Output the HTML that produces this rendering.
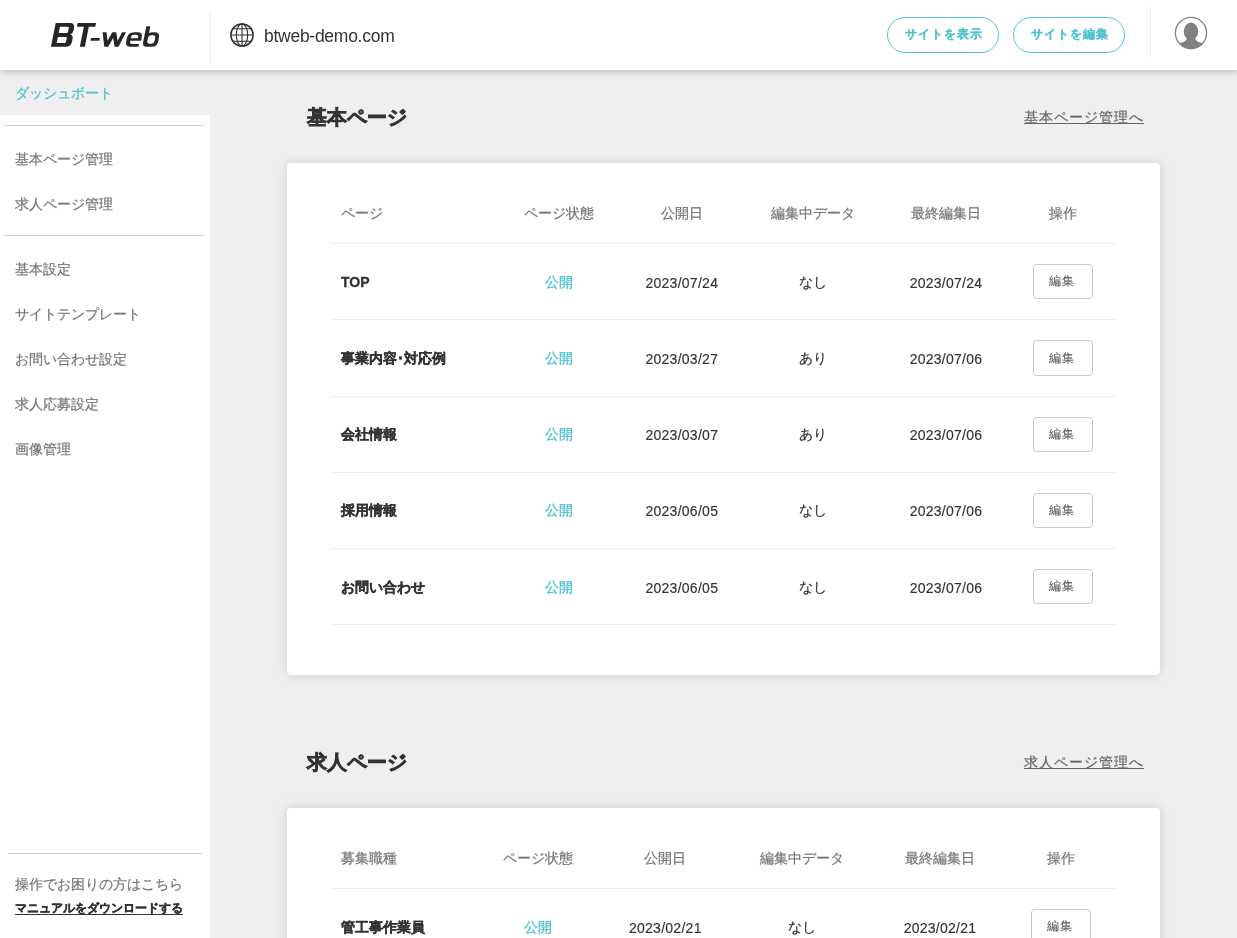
<!DOCTYPE html>
<html lang="ja">
<head>
<meta charset="utf-8">
<title>BT-web</title>
<style>
*{box-sizing:border-box;margin:0;padding:0}
html,body{width:1237px;height:938px;overflow:hidden}
body{font-family:"Liberation Sans",sans-serif;background:#efefef;color:#333;position:relative;font-size:14px}
/* header */
#hd{position:absolute;left:0;top:0;width:1237px;height:70px;background:#fff;box-shadow:0 2px 7px rgba(0,0,0,.20);z-index:10}
#logo{position:absolute;left:0;top:0;width:237px;height:70px}
#hd .v1{position:absolute;left:210px;top:13px;width:1px;height:50px;background:#ececec}
#hd .v2{position:absolute;left:1150px;top:7px;width:1px;height:50px;background:#ececec}
#globe{position:absolute;left:230px;top:22.9px;width:24px;height:24px}
#domain{position:absolute;left:264px;top:24.4px;font-size:17.5px;line-height:24px;color:#333;letter-spacing:-.27px;white-space:nowrap}
.pill{-webkit-text-stroke:.12px;position:absolute;top:17px;width:112px;height:36px;border:1px solid #4fc3d0;border-radius:18px;color:#4fc3d0;font-size:12px;font-weight:bold;line-height:32px;text-align:center;letter-spacing:1px;padding-left:1px;background:#fff}
#b1{left:887px}
#b2{left:1013px}
#avatar{position:absolute;left:1174px;top:16px;width:34px;height:34px}
/* sidebar */
#hd,#sb,.card,.h2,.lnk{will-change:transform}
#sb{position:absolute;left:0;top:70px;width:210px;height:868px;background:#fff}
#sb .act{position:absolute;left:0;top:0;width:210px;height:45px;background:#efefef}
#sb .it{-webkit-text-stroke:.2px;position:absolute;left:15px;font-size:14px;line-height:20px;color:#757575;white-space:nowrap}
#sb .hr{position:absolute;left:4px;width:200px;height:1px;background:#cfcfcf}
/* main */
.h2{-webkit-text-stroke:.7px #333;position:absolute;left:307px;font-size:20px;font-weight:bold;line-height:28px;color:#333;white-space:nowrap}
.lnk{-webkit-text-stroke:.2px;position:absolute;font-size:14px;line-height:20px;color:#666;text-decoration:underline;white-space:nowrap}
.card{position:absolute;left:287px;width:873px;background:#fff;border-radius:4px;box-shadow:0 0 11px rgba(0,0,0,.15)}
.ln{position:absolute;left:44px;width:785px;height:1px;background:#ebebeb}
.c{-webkit-text-stroke:.2px;position:absolute;white-space:nowrap;text-align:center;font-size:14px;line-height:20px;color:#333}
.c.h{color:#757575}
.c.n{-webkit-text-stroke:.3px;text-align:left;font-weight:bold;color:#333}
.c.n.h{-webkit-text-stroke:.2px;font-weight:normal;color:#757575}
.c.pub{color:#4fc3d0;-webkit-text-stroke:.3px}
.c.d{-webkit-text-stroke:.15px;letter-spacing:.27px;padding-left:.27px}
.btn{-webkit-text-stroke:.15px;position:absolute;width:60px;height:35px;border:1px solid #c9c9c9;border-radius:4px;background:#fff;font-size:12px;line-height:33px;color:#666;text-align:center;letter-spacing:1px;padding-right:2.5px}
</style>
</head>
<body>
<div id="hd">
  <svg id="logo" viewBox="0 0 237 70" width="237" height="70" fill="#262626">
    <defs><clipPath id="wc"><rect x="46" y="-14.47" width="30" height="14.47"/></clipPath></defs>
    <g transform="translate(50.94 46.75) skewX(-11.31)">
      <path fill-rule="evenodd" d="M0 0V-23.8H14.1Q19.3-23.8 19.3-18.6V-16.3Q19.3-13 16.9-12.2Q20.05-11.4 20.05-8V-5.2Q20.05 0 14.8 0ZM5-19.9V-13.8H13Q14.1-13.8 14.1-14.9V-18.8Q14.1-19.9 13-19.9ZM5-9.74V-3.85H13Q14.1-3.85 14.1-4.95V-8.64Q14.1-9.74 13-9.74Z"/>
      <path d="M21.95-23.8H40.3V-19.95H33.9V-.5Q33.9 0 33.4 0H29.4Q28.9 0 28.9-.5V-19.95H21.95Z"/>
      <path d="M38.3-8.8H47.1V-6.1H38.3Z"/>
      <path clip-path="url(#wc)" fill="none" stroke="#262626" stroke-width="3.75" stroke-miterlimit="10" d="M50.06-16.47L55.3 0L60.45-14.47L65.6 0L70.84-16.47"/>
      <path fill-rule="evenodd" d="M88.9-6V-9.5Q88.9-14.47 83.9-14.47H80.2Q74.2-14.47 74.2-8.47V-5.5Q74.2 0 79.7 0H86.5Q87.9 0 87.9-1.38Q87.9-2.76 86.5-2.76H80.5Q78.2-2.76 78.2-5V-6ZM78.1-8.5V-9.6Q78.1-11.9 80.4-11.9H82.7Q85.3-11.9 85.3-9.6V-8.5Z"/>
      <path fill-rule="evenodd" d="M91.3-20Q91.3-20.5 91.8-20.5H94.8Q95.3-20.5 95.3-20V-13.6Q96.5-14.47 99-14.47H100.7Q106.2-14.47 106.2-8.97V-5.5Q106.2 0 100.7 0H95.8Q91.3 0 91.3-4.5ZM95.3-8.9Q95.3-11.5 97.9-11.5H99.9Q102.5-11.5 102.5-8.9V-5.7Q102.5-3.1 99.9-3.1H97.9Q95.3-3.1 95.3-5.7Z"/>
    </g>
  </svg>
  <div class="v1"></div>
  <svg id="globe" viewBox="0 0 24 24" fill="none" stroke="#2e2e2e" stroke-width="1.1">
    <circle cx="12" cy="12" r="11.1" stroke-width="1.5"/>
    <ellipse cx="12" cy="12" rx="5.7" ry="11.1"/>
    <path d="M12 .9V23.1M.9 12H23.1M2.8 5.8H21.2M2.8 18.2H21.2"/>
  </svg>
  <div id="domain">btweb-demo.com</div>
  <div class="pill" id="b1">サイトを表示</div>
  <div class="pill" id="b2">サイトを編集</div>
  <div class="v2"></div>
  <svg id="avatar" viewBox="0 0 34 34">
    <defs><clipPath id="cp"><circle cx="17" cy="17" r="15.6"/></clipPath></defs>
    <g clip-path="url(#cp)" fill="#808080">
      <ellipse cx="17" cy="15.4" rx="7.2" ry="8.8"/>
      <path d="M13 22 C12.5 25 9 26.3 5 27.6 L3 34 L31 34 L29 27.6 C25 26.3 21.5 25 21 22 Z"/>
    </g>
    <circle cx="17" cy="17" r="15.6" fill="none" stroke="#808080" stroke-width="1.3"/>
  </svg>
</div>
<div id="sb">
  <div class="act"></div>
  <div class="it" style="top:13px;color:#4fc3d0;-webkit-text-stroke:.3px">ダッシュボート</div>
  <div class="hr" style="top:55px"></div>
  <div class="it" style="top:79px">基本ページ管理</div>
  <div class="it" style="top:124px">求人ページ管理</div>
  <div class="hr" style="top:165px"></div>
  <div class="it" style="top:189px">基本設定</div>
  <div class="it" style="top:234px">サイトテンプレート</div>
  <div class="it" style="top:279px">お問い合わせ設定</div>
  <div class="it" style="top:324px">求人応募設定</div>
  <div class="it" style="top:369px">画像管理</div>
  <div class="hr" style="top:783px;left:8px;width:194px"></div>
  <div class="it" style="top:804px">操作でお困りの方はこちら</div>
  <div class="it" style="top:828px;font-size:12px;font-weight:bold;color:#333;text-decoration:underline;text-underline-offset:2px;-webkit-text-stroke:.35px">マニュアルをダウンロードする</div>
</div>
<div class="h2" style="top:103px">基本ページ</div>
<div class="lnk" style="left:1024px;top:107px;letter-spacing:1px">基本ページ管理へ</div>
<div class="card" id="c1" style="top:163px;height:512px">
    <div class="c n h" style="left:54px;top:39.8px">ページ</div>
    <div class="c h" style="left:212.3px;top:39.8px;width:120px">ページ状態</div>
    <div class="c h" style="left:334.7px;top:39.8px;width:120px">公開日</div>
    <div class="c h" style="left:466.0px;top:39.8px;width:120px">編集中データ</div>
    <div class="c h" style="left:598.9px;top:39.8px;width:120px">最終編集日</div>
    <div class="c h" style="left:716.0px;top:39.8px;width:120px">操作</div>
    <div class="ln" style="top:80px"></div>
    <div class="ln" style="top:156px"></div>
    <div class="ln" style="top:233px"></div>
    <div class="ln" style="top:309px"></div>
    <div class="ln" style="top:385px"></div>
    <div class="ln" style="top:461px"></div>
    <div class="c n" style="left:54px;top:108.6px">TOP</div>
    <div class="c pub" style="left:212.3px;top:108.6px;width:120px">公開</div>
    <div class="c d" style="left:334.7px;top:109.5px;width:120px">2023/07/24</div>
    <div class="c " style="left:466.0px;top:108.6px;width:120px">なし</div>
    <div class="c d" style="left:598.9px;top:109.5px;width:120px">2023/07/24</div>
    <div class="btn" style="left:746px;top:101px;height:35px;line-height:33px">編集</div>
    <div class="c n" style="left:54px;top:184.9px">事業内容･対応例</div>
    <div class="c pub" style="left:212.3px;top:184.9px;width:120px">公開</div>
    <div class="c d" style="left:334.7px;top:185.8px;width:120px">2023/03/27</div>
    <div class="c " style="left:466.0px;top:184.9px;width:120px">あり</div>
    <div class="c d" style="left:598.9px;top:185.8px;width:120px">2023/07/06</div>
    <div class="btn" style="left:746px;top:177px;height:36px;line-height:34px">編集</div>
    <div class="c n" style="left:54px;top:261.1px">会社情報</div>
    <div class="c pub" style="left:212.3px;top:261.1px;width:120px">公開</div>
    <div class="c d" style="left:334.7px;top:262.0px;width:120px">2023/03/07</div>
    <div class="c " style="left:466.0px;top:261.1px;width:120px">あり</div>
    <div class="c d" style="left:598.9px;top:262.0px;width:120px">2023/07/06</div>
    <div class="btn" style="left:746px;top:254px;height:35px;line-height:33px">編集</div>
    <div class="c n" style="left:54px;top:337.4px">採用情報</div>
    <div class="c pub" style="left:212.3px;top:337.4px;width:120px">公開</div>
    <div class="c d" style="left:334.7px;top:338.3px;width:120px">2023/06/05</div>
    <div class="c " style="left:466.0px;top:337.4px;width:120px">なし</div>
    <div class="c d" style="left:598.9px;top:338.3px;width:120px">2023/07/06</div>
    <div class="btn" style="left:746px;top:330px;height:35px;line-height:33px">編集</div>
    <div class="c n" style="left:54px;top:413.6px">お問い合わせ</div>
    <div class="c pub" style="left:212.3px;top:413.6px;width:120px">公開</div>
    <div class="c d" style="left:334.7px;top:414.5px;width:120px">2023/06/05</div>
    <div class="c " style="left:466.0px;top:413.6px;width:120px">なし</div>
    <div class="c d" style="left:598.9px;top:414.5px;width:120px">2023/07/06</div>
    <div class="btn" style="left:746px;top:406px;height:35px;line-height:33px">編集</div>
</div>
<div class="h2" style="top:748px">求人ページ</div>
<div class="lnk" style="left:1024px;top:752px;letter-spacing:1px">求人ページ管理へ</div>
<div class="card" id="c2" style="top:808px;height:200px">
    <div class="c n h" style="left:54px;top:39.8px">募集職種</div>
    <div class="c h" style="left:191.3px;top:39.8px;width:120px">ページ状態</div>
    <div class="c h" style="left:318.2px;top:39.8px;width:120px">公開日</div>
    <div class="c h" style="left:455.0px;top:39.8px;width:120px">編集中データ</div>
    <div class="c h" style="left:592.9px;top:39.8px;width:120px">最終編集日</div>
    <div class="c h" style="left:714.0px;top:39.8px;width:120px">操作</div>
    <div class="ln" style="top:80px"></div>
    <div class="c n" style="left:54px;top:108.6px">管工事作業員</div>
    <div class="c pub" style="left:191.3px;top:108.6px;width:120px">公開</div>
    <div class="c d" style="left:318.2px;top:109.5px;width:120px">2023/02/21</div>
    <div class="c " style="left:455.0px;top:108.6px;width:120px">なし</div>
    <div class="c d" style="left:592.9px;top:109.5px;width:120px">2023/02/21</div>
    <div class="btn" style="left:744px;top:101px;height:35px;line-height:33px">編集</div>
</div>
</body>
</html>
